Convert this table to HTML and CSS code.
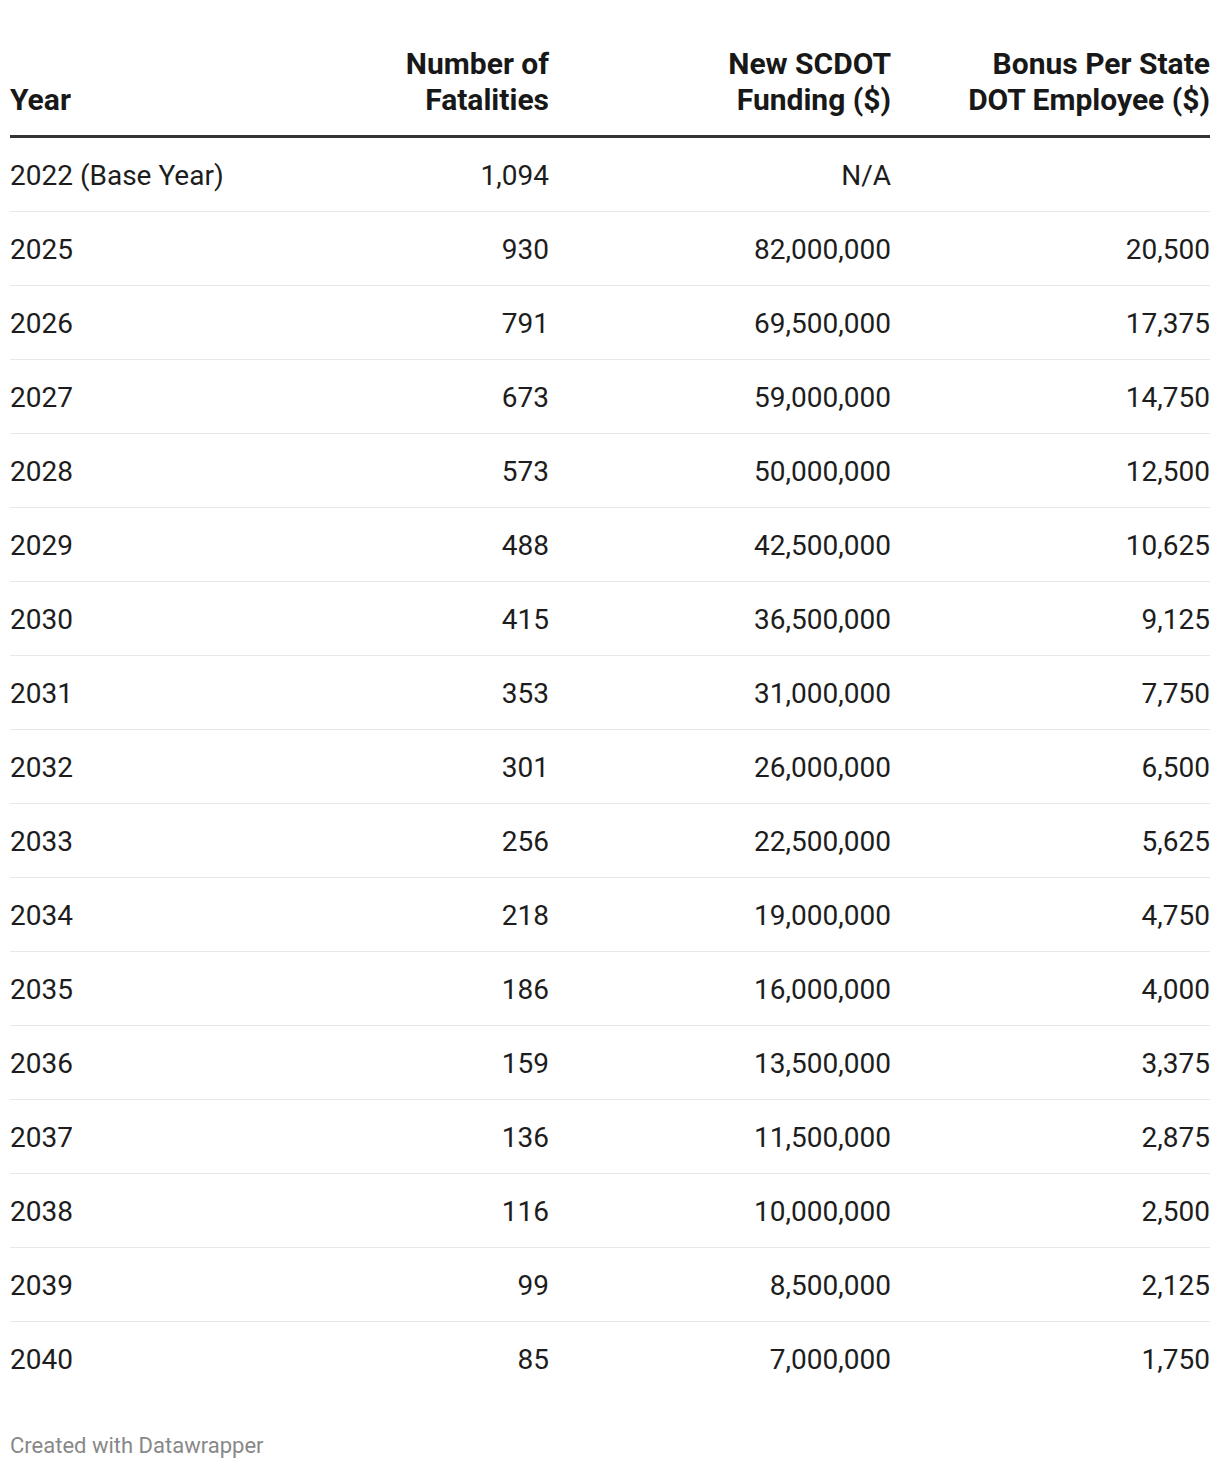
FILE: index.html
```html
<!DOCTYPE html>
<html>
<head>
<meta charset="utf-8">
<link rel="stylesheet" href="styles.css">
</head>
<body>
<div class="wrap">
<table class="dt">
<colgroup><col class="c1"><col class="c2"><col class="c3"><col class="c4"></colgroup>
<thead>
<tr><th class="l">Year</th><th>Number of<br>Fatalities</th><th>New SCDOT<br>Funding ($)</th><th>Bonus Per State<br>DOT Employee ($)</th></tr>
</thead>
<tbody>
<tr><td class="l">2022 (Base Year)</td><td>1,094</td><td>N/A</td><td></td></tr>
<tr><td class="l">2025</td><td>930</td><td>82,000,000</td><td>20,500</td></tr>
<tr><td class="l">2026</td><td>791</td><td>69,500,000</td><td>17,375</td></tr>
<tr><td class="l">2027</td><td>673</td><td>59,000,000</td><td>14,750</td></tr>
<tr><td class="l">2028</td><td>573</td><td>50,000,000</td><td>12,500</td></tr>
<tr><td class="l">2029</td><td>488</td><td>42,500,000</td><td>10,625</td></tr>
<tr><td class="l">2030</td><td>415</td><td>36,500,000</td><td>9,125</td></tr>
<tr><td class="l">2031</td><td>353</td><td>31,000,000</td><td>7,750</td></tr>
<tr><td class="l">2032</td><td>301</td><td>26,000,000</td><td>6,500</td></tr>
<tr><td class="l">2033</td><td>256</td><td>22,500,000</td><td>5,625</td></tr>
<tr><td class="l">2034</td><td>218</td><td>19,000,000</td><td>4,750</td></tr>
<tr><td class="l">2035</td><td>186</td><td>16,000,000</td><td>4,000</td></tr>
<tr><td class="l">2036</td><td>159</td><td>13,500,000</td><td>3,375</td></tr>
<tr><td class="l">2037</td><td>136</td><td>11,500,000</td><td>2,875</td></tr>
<tr><td class="l">2038</td><td>116</td><td>10,000,000</td><td>2,500</td></tr>
<tr><td class="l">2039</td><td>99</td><td>8,500,000</td><td>2,125</td></tr>
<tr><td class="l">2040</td><td>85</td><td>7,000,000</td><td>1,750</td></tr>
</tbody>
</table>
<div class="foot">Created with Datawrapper</div>
</div>
</body>
</html>
```
FILE: styles.css
```css
html, body { margin: 0; padding: 0; background: #fff; }
body { font-family: Roboto, "Noto Sans", sans-serif; color: #1d1d1d; }
.wrap { padding: 46px 10px 0 10px; }
.dt { width: 1200px; border-collapse: collapse; table-layout: fixed; }
.c1 { width: 300px; }
.c2 { width: 239px; }
.c3 { width: 342px; }
.c4 { width: 319px; }
.dt th {
  font-weight: 700; font-size: 30px; line-height: 36px; color: #181818;
  text-align: right; vertical-align: bottom; padding: 0 0 17px 0;
  border-bottom: 3px solid #333;
}
.dt td {
  font-size: 28px; line-height: 30px; text-align: right; height: 71px; padding: 2px 0 0 0;
  vertical-align: middle; border-bottom: 1px solid #e8e8e8;
}
.dt tbody tr:last-child td { border-bottom: none; }
.dt .l { text-align: left; }
.foot { font-size: 22px; color: #888; margin-top: 39px; line-height: 24px; }
```
